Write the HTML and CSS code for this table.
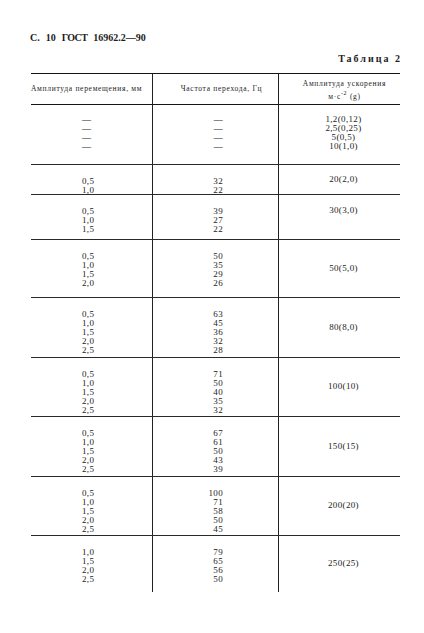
FILE: index.html
```html
<!DOCTYPE html>
<html lang="ru">
<head>
<meta charset="utf-8">
<title>ГОСТ 16962.2—90</title>
<link rel="stylesheet" href="styles.css">
</head>
<body>
<div class="page">
  <div class="running-head"><span>С.</span><span>10</span><span class="gost">ГОСТ</span><span>16962.2—90</span></div>
  <div class="caption">Таблица 2</div>
  <div class="table">
    <div class="row head">
      <div class="cell c1">Амплитуда перемещения, мм</div>
      <div class="cell c2">Частота перехода, Гц</div>
      <div class="cell c3">Амплитуда ускорения<br>м·с<sup>-2</sup> (g)</div>
    </div>
    <div class="row r1">
      <div class="cell c1">—<br>—<br>—<br>—</div>
      <div class="cell c2">—<br>—<br>—<br>—</div>
      <div class="cell c3 top">1,2(0,12)<br>2,5(0,25)<br>5(0,5)<br>10(1,0)</div>
    </div>
    <div class="row r2">
      <div class="cell c1">0,5<br>1,0</div>
      <div class="cell c2">32<br>22</div>
      <div class="cell c3">20(2,0)</div>
    </div>
    <div class="row r3">
      <div class="cell c1">0,5<br>1,0<br>1,5</div>
      <div class="cell c2">39<br>27<br>22</div>
      <div class="cell c3 top">30(3,0)</div>
    </div>
    <div class="row r4">
      <div class="cell c1">0,5<br>1,0<br>1,5<br>2,0</div>
      <div class="cell c2">50<br>35<br>29<br>26</div>
      <div class="cell c3">50(5,0)</div>
    </div>
    <div class="row r5">
      <div class="cell c1">0,5<br>1,0<br>1,5<br>2,0<br>2,5</div>
      <div class="cell c2">63<br>45<br>36<br>32<br>28</div>
      <div class="cell c3">80(8,0)</div>
    </div>
    <div class="row r6">
      <div class="cell c1">0,5<br>1,0<br>1,5<br>2,0<br>2,5</div>
      <div class="cell c2">71<br>50<br>40<br>35<br>32</div>
      <div class="cell c3">100(10)</div>
    </div>
    <div class="row r7">
      <div class="cell c1">0,5<br>1,0<br>1,5<br>2,0<br>2,5</div>
      <div class="cell c2">67<br>61<br>50<br>43<br>39</div>
      <div class="cell c3">150(15)</div>
    </div>
    <div class="row r8">
      <div class="cell c1">0,5<br>1,0<br>1,5<br>2,0<br>2,5</div>
      <div class="cell c2">100<br>71<br>58<br>50<br>45</div>
      <div class="cell c3">200(20)</div>
    </div>
    <div class="row r9 last">
      <div class="cell c1">1,0<br>1,5<br>2,0<br>2,5</div>
      <div class="cell c2">79<br>65<br>56<br>50</div>
      <div class="cell c3">250(25)</div>
    </div>
  </div>
</div>
</body>
</html>
```

FILE: styles.css
```css
html, body {
  margin: 0;
  padding: 0;
  background: #ffffff;
}

body {
  font-family: "Liberation Serif", "Times New Roman", serif;
  color: #1c1c1c;
}

.page {
  width: 372px;
  padding: 32px 0 0 30px;
}

.running-head {
  display: flex;
  gap: 6px;
  height: 12px;
  line-height: 12px;
  font-size: 10px;
  font-weight: bold;
}

.running-head .gost {
  letter-spacing: -0.6px;
}

.caption {
  margin-top: 9px;
  height: 12px;
  line-height: 12px;
  text-align: right;
  font-size: 10px;
  font-weight: bold;
  letter-spacing: 2px;
  margin-bottom: 8px;
}

.table {
  margin-left: 1px;
  width: 369px;
  border-top: 1.5px solid #151515;
}

.row {
  display: grid;
  grid-template-columns: 122px 126px 121px;
  box-sizing: border-box;
  border-bottom: 1px solid #2a2a2a;
}

.row.last {
  border-bottom: none;
}

.cell {
  box-sizing: border-box;
  font-size: 9px;
  letter-spacing: 0.35px;
  line-height: 9px;
  padding-top: 12px;
}

.c1, .c2 {
  border-right: 1px solid #222;
}

.c1 {
  padding-left: 51px;
}

.c2 {
  text-align: right;
  padding-right: 55px;
}

.c3 {
  text-align: center;
  padding: 0 0 0 8px;
  align-self: center;
}

.c3.top {
  align-self: start;
  padding-top: 11px;
}

.head {
  height: 30.5px;
  border-bottom: 1px solid #151515;
}

.head .cell {
  font-size: 7.5px;
  letter-spacing: 0.7px;
  line-height: 13px;
  padding-top: 0;
  align-self: stretch;
  display: flex;
  align-items: center;
}

.head .c1 {
  padding-left: 0;
}

.head .c2 {
  justify-content: center;
  padding: 0 0 0 12px;
  text-align: center;
}

.head .c3 {
  display: block;
  padding-top: 3px;
  padding-left: 10px;
}

.head sup {
  font-size: 6px;
  line-height: 0;
  vertical-align: 4px;
}

.r1 { height: 60px; }
.r1 .c1, .r1 .c2 { padding-top: 10px; }
.r1 .c3.top { padding-top: 10px; }
.r2 { height: 30px; }
.r3 { height: 45px; }
.r4 { height: 58px; }
.r5 { height: 60px; }
.r6 { height: 59px; }
.r7 { height: 60px; }
.r8 { height: 59px; }
.r9 { height: 56px; }
```
